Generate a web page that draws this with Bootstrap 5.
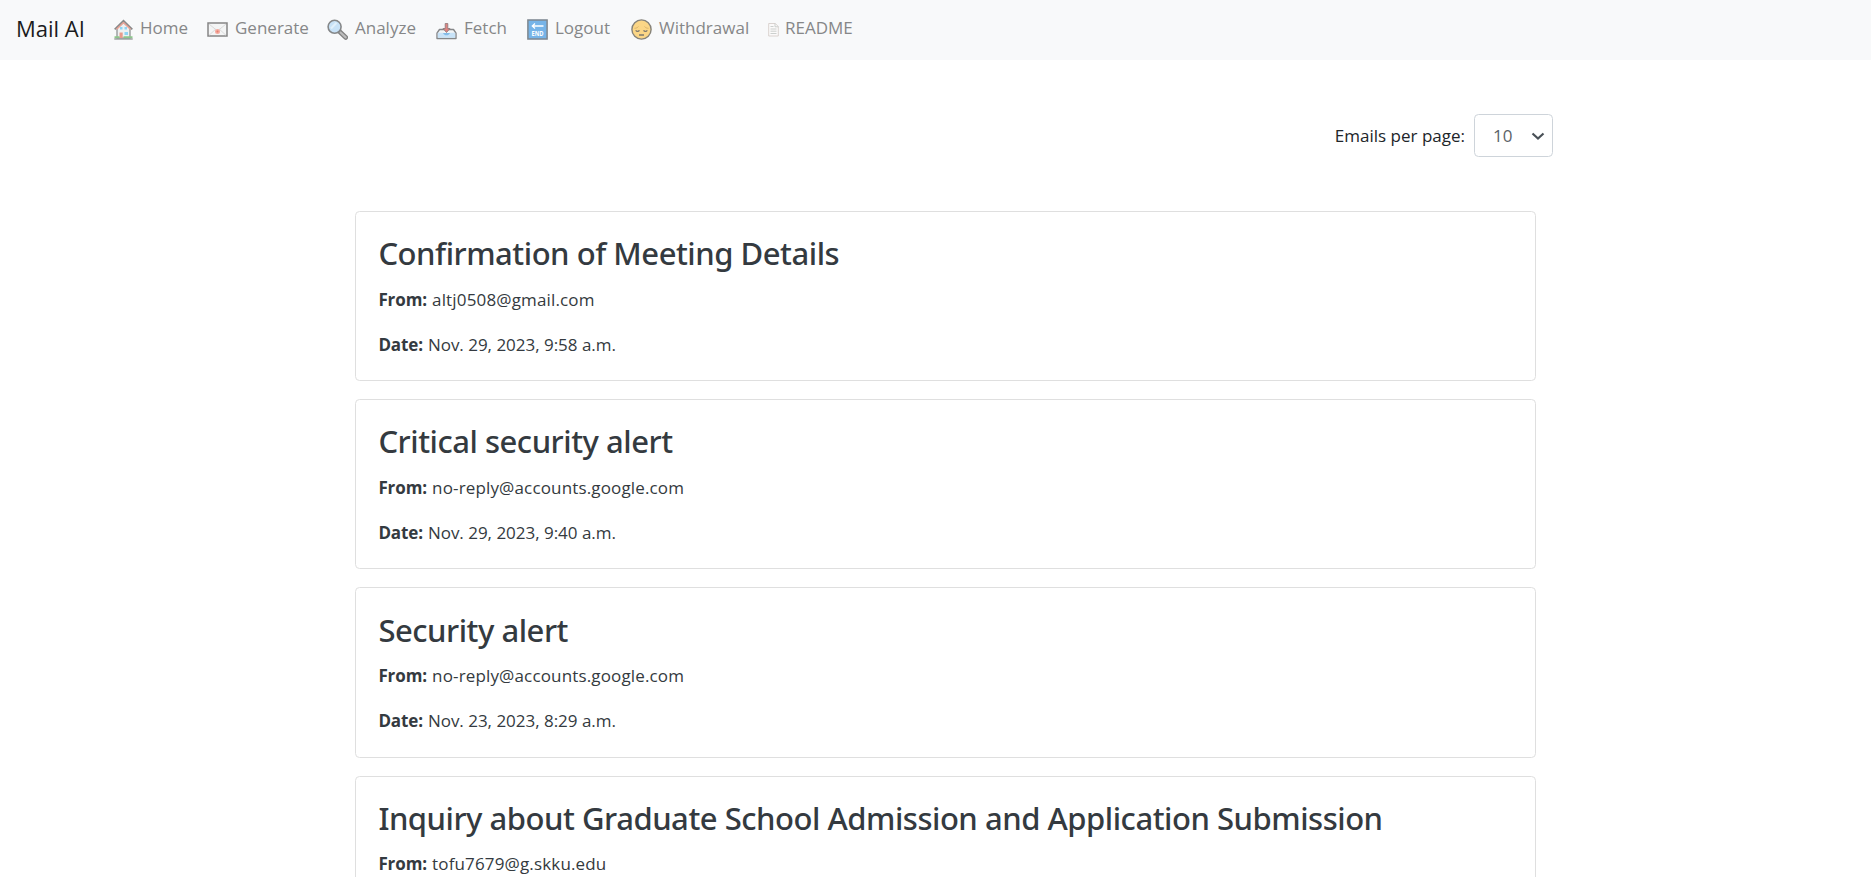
<!DOCTYPE html>
<html lang="en">
<head>
<meta charset="utf-8">
<meta name="viewport" content="width=device-width, initial-scale=1">
<title>Mail AI</title>
<link rel="stylesheet" href="https://cdn.jsdelivr.net/npm/bootstrap@5.3.0/dist/css/bootstrap.min.css">
<style>
body{height:100vh;font-family:"Open Sans","Noto Sans",sans-serif;font-size:17px;font-weight:400;color:#212529;overflow:hidden}
.topbar{height:60px;background:#f8f9fa;padding:0 0 0 16px}
.topbar .navbar-brand{width:98px;margin:0;padding:0 0 4px;font-size:22px;line-height:30px;color:#1b1c1d}
.menu{display:grid;grid-template-columns:93px 120px 109px 91px 104px 137px auto}
.menu .nav-link{padding:0 0 4px;gap:7px;line-height:26px;color:#868788;white-space:nowrap}
.menu svg{width:21px;height:21px;flex:none;position:relative;top:1px}
.menu .ico-home{width:19px}
.menu .ico-doc{width:11px;margin-right:-1px}
.page{margin-left:355px;width:1198px;height:817px;padding-top:54px;overflow:hidden}
.pager{height:43px;margin-bottom:54px;gap:9px}
.pager label{padding-top:1px}
.pager .form-select{width:79px;height:43px;padding:1px 0 0 18px;font-size:17px;color:#5c6369;border:1px solid #ced4da;border-radius:4.5px;background-position:right 7px center;background-size:14px 14px;background-image:url("data:image/svg+xml,%3csvg xmlns='http://www.w3.org/2000/svg' viewBox='0 0 14 14'%3e%3cpath fill='none' stroke='%23495057' stroke-width='2.2' d='M1.5 4.500 7 9.500l5.500-5'/%3e%3c/svg%3e")}
.mail{width:1181px;height:170.200px;margin-bottom:18px;padding:22.200px 22.400px 20px;border:1px solid #dfdfdf;border-radius:4.5px;color:#343a40}
.mail h2{font-family:"Noto Sans","Open Sans",sans-serif;font-size:31px;font-weight:500;line-height:39px;letter-spacing:-.47px;margin:0 0 12.5px;white-space:nowrap}
.mail p{line-height:27px;letter-spacing:.15px;margin:0 0 18px}
.mail .sent{letter-spacing:-.02px}
.mail strong{font-weight:700;letter-spacing:-.1px;margin-right:.5px}
</style>
</head>
<body class="bg-white">
<nav class="navbar topbar justify-content-start flex-nowrap">
  <a class="navbar-brand" href="#">Mail AI</a>
  <div class="menu">
    <a class="nav-link d-flex align-items-center" href="#">
      <svg class="ico-home" viewBox="0 0 19 21"><path d="M3 9.500 9.500 3.500 16 9.500V19H3z" fill="#eef1f2" stroke="#898c8d" stroke-width="1.200"/><path d="M.7 10.300 9.500 1.700l8.800 8.600" fill="none" stroke="#898989" stroke-width="1.800"/><path d="M2.500 10.300 9.500 3.600l7 6.700" fill="none" stroke="#f0a294" stroke-width="1.400"/><path d="M6 8h2.500v2.500H6zm4.500 0H13v2.500h-2.500zm0 5H14v3h-3.500z" fill="#8ed4f4"/><path d="M5.500 13.500h3.200V19H5.500z" fill="#e89a8c"/><path d="M.5 18.300h5m4 0h9" stroke="#8cc68b" stroke-width="2"/><path d="M.3 20h18.400" stroke="#898c8d" stroke-width="1.200"/></svg>Home</a>
    <a class="nav-link d-flex align-items-center" href="#">
      <svg viewBox="0 0 21 21"><path d="M1 4h19v13H1z" fill="#f4f5f5" stroke="#858585" stroke-width="1.500"/><path d="M2 5l8.500 7L19 5M2 16.300l6.500-6m10.500 6-6.500-6" fill="none" stroke="#d6d6d6" stroke-width=".9"/><circle cx="10.500" cy="12.600" r="2.500" fill="#f5ab9f"/><circle cx="10.500" cy="12.600" r="1" fill="#e67e70"/></svg>Generate</a>
    <a class="nav-link d-flex align-items-center" href="#">
      <svg viewBox="0 0 21 21"><path d="m12.500 12.500 6.300 6" stroke="#7f7f7f" stroke-width="4.600" stroke-linecap="round"/><path d="m13.500 13.500 5.200 4.900" stroke="#bcbcbc" stroke-width="2.200" stroke-linecap="round"/><circle cx="7.600" cy="7.800" r="6.500" fill="#c8e2f7" stroke="#858788" stroke-width="1.600"/><path d="M4 9.500 9.500 3.700" stroke="#e1f0fb" stroke-width="2"/></svg>Analyze</a>
    <a class="nav-link d-flex align-items-center" href="#">
      <svg viewBox="0 0 21 21"><path d="M3.500 10.500h14l2.500 3.700v5.300H1v-5.300z" fill="#f3f5f6" stroke="#858789" stroke-width="1.400" stroke-linejoin="round"/><path d="M1.800 13.700h5.700c.3 1.600 1.500 2.400 3 2.400s2.700-.8 3-2.400h5.700v5.100H1.800z" fill="#c8e3f8"/><path d="M7 14c.7 1.700 2 2.300 3.500 2.300S13.300 15.700 14 14" fill="#82bce9"/><path d="M9.200 4.500h2.600v5h2.200l-3.500 4-3.500-4h2.200z" fill="#df8582" stroke="#8c7778" stroke-width=".8"/></svg>Fetch</a>
    <a class="nav-link d-flex align-items-center" href="#">
      <svg viewBox="0 0 21 21"><path d="M.9.900h19.200v19.200H.9z" fill="#76b4e8" stroke="#7f878e" stroke-width="1.500"/><path d="M5 7h11.500M8 4.500 5.300 7 8 9.500" fill="none" stroke="#fff" stroke-width="1.300"/><text x="10.500" y="17" text-anchor="middle" font-size="6.200" font-weight="700" fill="#fff" textLength="12" lengthAdjust="spacingAndGlyphs">END</text></svg>Logout</a>
    <a class="nav-link d-flex align-items-center" href="#">
      <svg viewBox="0 0 21 21"><circle cx="10.500" cy="10.500" r="9.600" fill="#fbd686" stroke="#858279" stroke-width="1.400"/><path d="M3.500 9.300c1.700 0 3-.6 4-1.800m10 1.800c-1.700 0-3-.6-4-1.800" fill="none" stroke="#dcb56a" stroke-width="1"/><path d="M4.800 11.200c.7 1.600 2.800 1.700 3.600.1m4.200 0c.8 1.600 2.900 1.500 3.600-.1M8 16h5" fill="none" stroke="#7d796f" stroke-width="1.300"/></svg>Withdrawal</a>
    <a class="nav-link d-flex align-items-center" href="#">
      <svg class="ico-doc" viewBox="0 0 11 21"><path d="M.7 4.500h6.600l3 3V17H.7z" fill="#fbfafa" stroke="#d6cecb" stroke-width=".9"/><path d="M7 4.500v3.300h3.300M2.500 7.500h3M2.500 10h6m-6 2.200h6m-6 2.300h6" fill="none" stroke="#c5c9c7" stroke-width=".9"/></svg>README</a>
  </div>
</nav>
<main class="page">
  <div class="pager d-flex align-items-center justify-content-end">
    <label for="per-page">Emails per page:</label>
    <select id="per-page" class="form-select"><option>10</option></select>
  </div>
  <article class="mail"><h2>Confirmation of Meeting Details</h2><p><strong>From:</strong> altj0508@gmail.com</p><p class="sent"><strong>Date:</strong> Nov. 29, 2023, 9:58 a.m.</p></article>
  <article class="mail"><h2>Critical security alert</h2><p><strong>From:</strong> no-reply@accounts.google.com</p><p class="sent"><strong>Date:</strong> Nov. 29, 2023, 9:40 a.m.</p></article>
  <article class="mail"><h2>Security alert</h2><p><strong>From:</strong> no-reply@accounts.google.com</p><p class="sent"><strong>Date:</strong> Nov. 23, 2023, 8:29 a.m.</p></article>
  <article class="mail"><h2>Inquiry about Graduate School Admission and Application Submission</h2><p><strong>From:</strong> tofu7679@g.skku.edu</p></article>
</main>
<script src="https://cdn.jsdelivr.net/npm/bootstrap@5.3.0/dist/js/bootstrap.bundle.min.js"></script>
</body>
</html>
